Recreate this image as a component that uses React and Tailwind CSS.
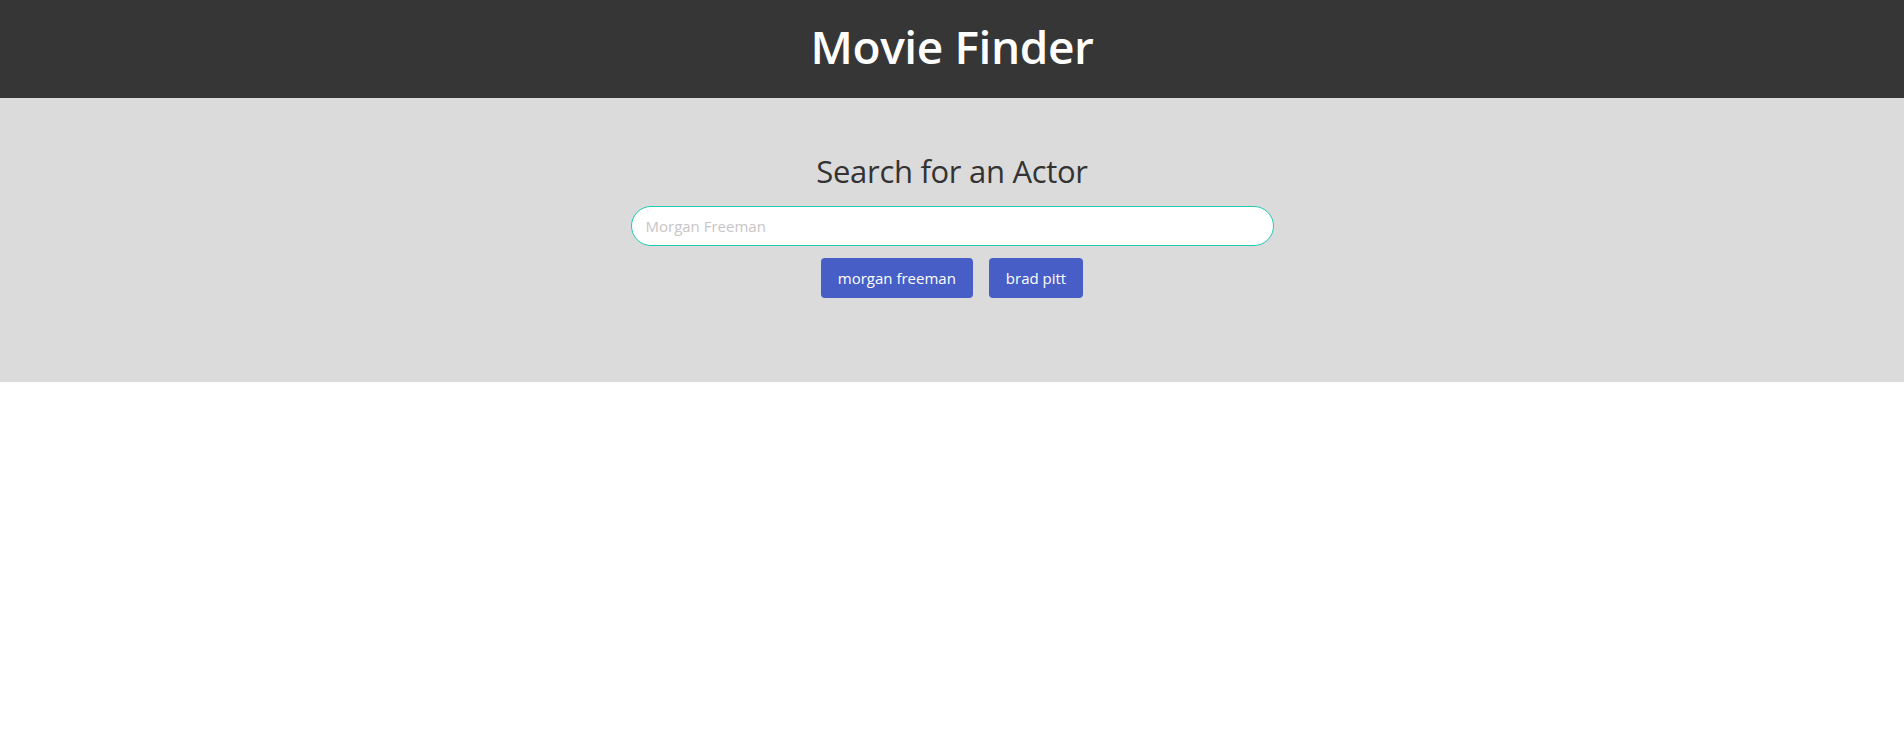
export default function App() {
  return (
    <div className="min-h-screen bg-white font-['Open_Sans','Noto_Sans',sans-serif]">
      <header className="h-[98px] bg-[#363636] flex items-center justify-center pb-[7px]">
        <h1 className="text-[46px] font-semibold text-white leading-none tracking-[-0.4px]">Movie Finder</h1>
      </header>
      <section className="h-[284px] bg-[#dbdbdb] flex flex-col items-center pt-[53px]">
        <h2 className="text-[31px] font-normal text-[#333] leading-[40px] tracking-[-0.3px]">Search for an Actor</h2>
        <input
          type="text"
          placeholder="Morgan Freeman"
          className="mt-[15px] w-[643px] h-[40px] rounded-full bg-white border border-[#1ecbb2] px-[14px] text-[15px] outline-none placeholder:text-[#c9c4c6]"
        />
        <div className="mt-[12px] flex gap-4">
          <button className="h-[40px] px-[17px] rounded bg-[#475ec6] text-white text-[15px]">morgan freeman</button>
          <button className="h-[40px] px-[17px] rounded bg-[#475ec6] text-white text-[15px]">brad pitt</button>
        </div>
      </section>
    </div>
  );
}
